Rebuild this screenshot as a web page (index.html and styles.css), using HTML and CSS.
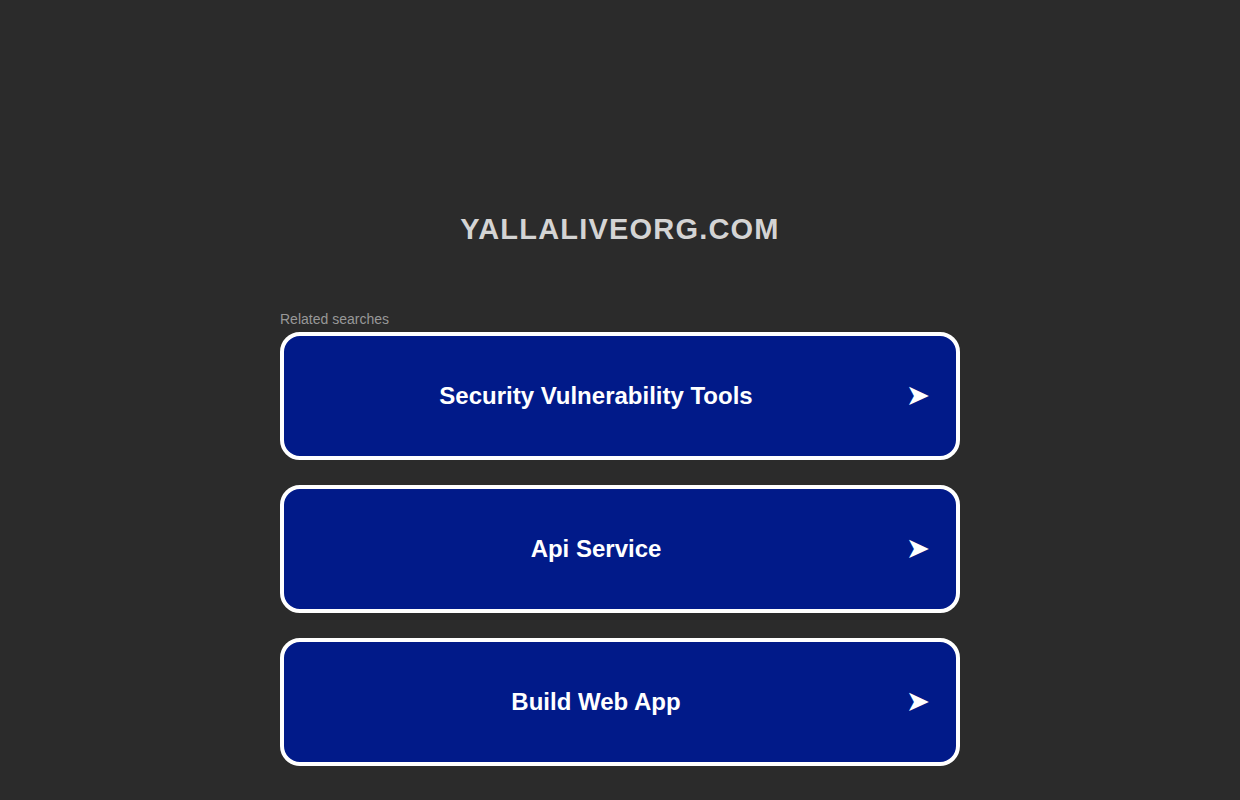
FILE: index.html
```html
<!DOCTYPE html>
<html lang="en">

<head>
    <meta charset="UTF-8">
    <meta name="viewport" content="width=device-width, initial-scale=1.0">
    <title>yallaliveorg.com</title>
    <link rel="stylesheet" href="styles.css">
</head>

<body>
    <div class="container">
        <header class="header">
            <h1 class="header__domain">yallaliveorg.com</h1>
        </header>
        <main class="main">
            <div class="main__label">Related searches</div>
            <div class="main__list">
                <a href="#" class="search">
                    <span class="search__text">Security Vulnerability Tools</span>
                    <span class="search__arrow">&#10148;</span>
                </a>
                <a href="#" class="search">
                    <span class="search__text">Api Service</span>
                    <span class="search__arrow">&#10148;</span>
                </a>
                <a href="#" class="search">
                    <span class="search__text">Build Web App</span>
                    <span class="search__arrow">&#10148;</span>
                </a>
            </div>
        </main>
    </div>
</body>

</html>
```

FILE: styles.css
```css
body {
    margin: 0;
    background-color: #2b2b2b;
    font-family: 'Liberation Sans', Arial, sans-serif;
}

a {
    text-decoration: none;
    color: #fff;
}

.container {
    display: flex;
    flex-direction: column;
    align-items: center;
    width: 100%;
    min-height: 800px;
}

.header {
    padding-top: 211px;
    height: 100px;
    box-sizing: content-box;
}

.header__domain {
    margin: 0;
    font-size: 29px;
    font-weight: bold;
    text-transform: uppercase;
    letter-spacing: 1.2px;
    color: #d4d4d4;
    line-height: 36px;
}

.main {
    width: 680px;
}

.main__label {
    font-size: 14px;
    color: #989898;
    line-height: 16px;
    margin-bottom: 5px;
}

.main__list {
    display: flex;
    flex-direction: column;
    gap: 25px;
}

.search {
    display: flex;
    align-items: center;
    height: 128px;
    box-sizing: border-box;
    border: 4px solid #fff;
    border-radius: 20px;
    background-color: #011a89;
    padding-right: 28px;
}

.search__text {
    flex: 1;
    text-align: center;
    font-size: 24px;
    font-weight: bold;
}

.search__arrow {
    width: 20px;
    display: flex;
    justify-content: center;
    font-size: 29px;
    line-height: 30px;
    padding-bottom: 3px;
    font-family: 'DejaVu Sans', sans-serif;
}
```
